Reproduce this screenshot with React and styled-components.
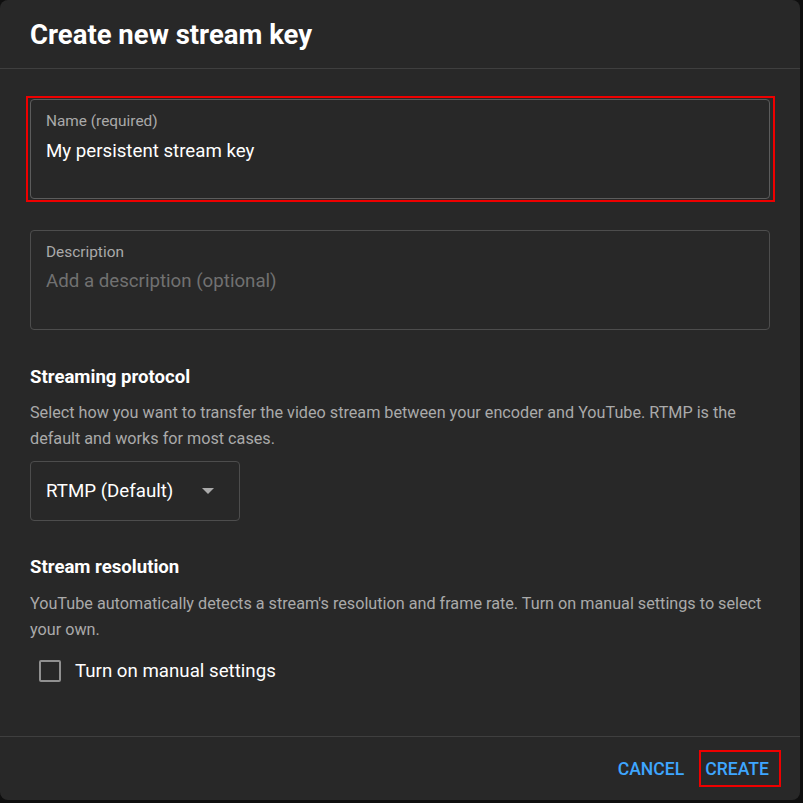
import React from 'react';
import styled, { createGlobalStyle } from 'styled-components';

const Global = createGlobalStyle`
  body {
    margin: 0;
    background: #0f0f0f;
    font-family: Roboto, "Liberation Sans", Arial, sans-serif;
  }
`;

const Dialog = styled.div`
  width: 800px;
  height: 800px;
  background: #282828;
  border-radius: 8px;
  display: flex;
  flex-direction: column;
  color: #fff;
`;

const Header = styled.div`
  height: 69px;
  padding: 1px 30px 0;
  box-sizing: border-box;
  display: flex;
  align-items: center;
  border-bottom: 1px solid #3f3f3f;
`;

const Title = styled.h1`
  margin: 0;
  font-size: 27.5px;
  font-weight: 700;
`;

const Body = styled.div`
  flex: 1;
  padding: 27px 30px 0;
  display: flex;
  flex-direction: column;
`;

// red annotation frame around the focused field
const Highlight = styled.div`
  border: 2px solid #e00;
  padding: 1px 3px 1px 2px;
  margin: 0 -5px 28px -4px;
`;

const Field = styled.div`
  height: 100px;
  box-sizing: border-box;
  border: 1px solid ${p => (p.$focused ? '#5c5c5c' : '#4d4d4d')};
  border-radius: 4px;
  padding: 12px 15px;
  margin-bottom: ${p => (p.$flush ? '0' : '30px')};
`;

const Label = styled.div`
  font-size: 15.4px;
  color: #aaa;
  line-height: 18px;
`;

const Value = styled.div`
  margin-top: ${p => (p.$placeholder ? '8px' : '9px')};
  font-size: 18.7px;
  line-height: 24px;
  color: ${p => (p.$placeholder ? '#717171' : '#fff')};
`;

const Heading = styled.h2`
  margin: ${p => p.$top || 0} 0 0;
  font-size: 18.6px;
  font-weight: 700;
  line-height: 26px;
`;

const Help = styled.p`
  margin: ${p => p.$top || '10px'} 0 0;
  font-size: 16.2px;
  line-height: 26px;
  color: #aaa;
`;

const Select = styled.div`
  margin: 9px 0 32px;
  width: 210px;
  height: 60px;
  box-sizing: border-box;
  border: 1px solid #4d4d4d;
  border-radius: 4px;
  padding: 0 25px 0 15px;
  display: flex;
  align-items: center;
  justify-content: space-between;
  font-size: 18.7px;
`;

const Arrow = styled.span`
  width: 0;
  height: 0;
  border-left: 6px solid transparent;
  border-right: 6px solid transparent;
  border-top: 6px solid #aaa;
`;

const CheckRow = styled.label`
  margin-top: 16px;
  margin-left: 9px;
  display: flex;
  align-items: center;
  gap: 14px;
  font-size: 18.7px;
  line-height: 24px;
`;

const Box = styled.span`
  width: 18px;
  height: 18px;
  border: 2px solid #909090;
  border-radius: 2px;
`;

const Footer = styled.div`
  height: 64px;
  box-sizing: border-box;
  border-top: 1px solid #3f3f3f;
  display: flex;
  align-items: center;
  justify-content: flex-end;
  padding: 0 19px 0 0;
  gap: 3px;
`;

const TextButton = styled.button`
  background: none;
  border: ${p => (p.$highlight ? '2px solid #e00' : '2px solid transparent')};
  color: #3ea6ff;
  font-family: inherit;
  font-size: 17.6px;
  font-weight: 500;
  text-transform: uppercase;
  height: 37px;
  padding: 0 10px 0 4px;
  cursor: pointer;
`;

export default function App() {
  return (
    <>
      <Global />
      <Dialog>
        <Header>
          <Title>Create new stream key</Title>
        </Header>
        <Body>
          <Highlight>
            <Field $focused $flush>
              <Label>Name (required)</Label>
              <Value>My persistent stream key</Value>
            </Field>
          </Highlight>
          <Field>
            <Label>Description</Label>
            <Value $placeholder>Add a description (optional)</Value>
          </Field>
          <Heading $top="4px">Streaming protocol</Heading>
          <Help>
            Select how you want to transfer the video stream between your encoder and YouTube. RTMP is the
            default and works for most cases.
          </Help>
          <Select>
            RTMP (Default)
            <Arrow />
          </Select>
          <Heading $top="1px">Stream resolution</Heading>
          <Help $top="11px">
            YouTube automatically detects a stream's resolution and frame rate. Turn on manual settings to select
            your own.
          </Help>
          <CheckRow>
            <Box />
            Turn on manual settings
          </CheckRow>
        </Body>
        <Footer>
          <TextButton>Cancel</TextButton>
          <TextButton $highlight>Create</TextButton>
        </Footer>
      </Dialog>
    </>
  );
}
